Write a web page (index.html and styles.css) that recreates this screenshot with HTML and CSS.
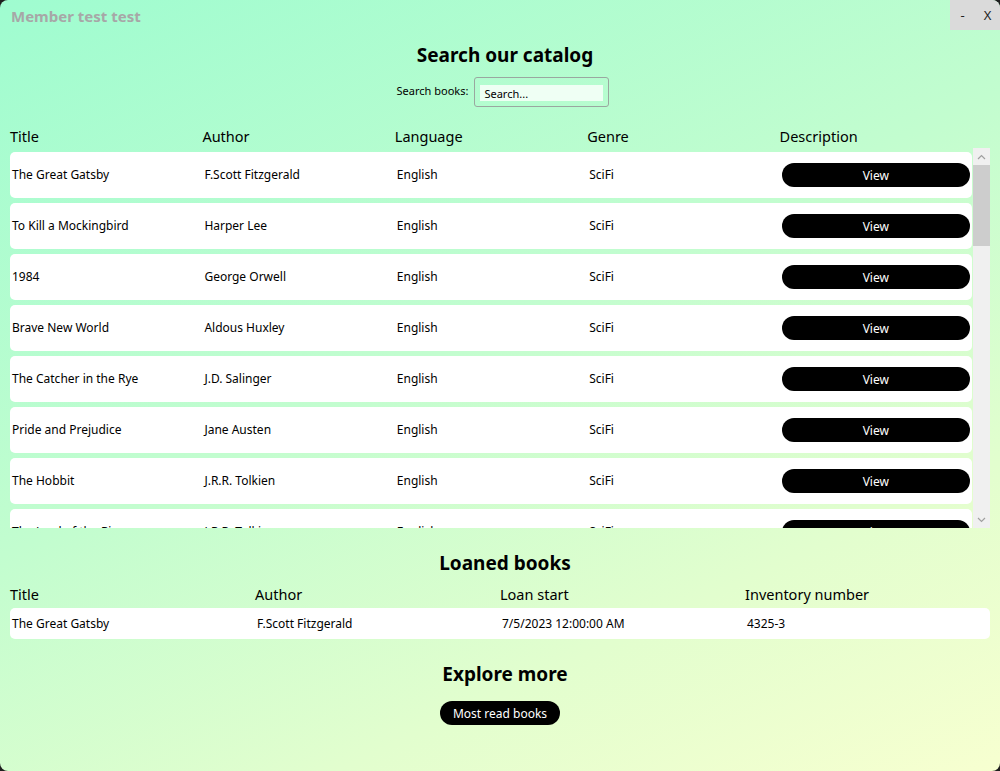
FILE: index.html
```html
<!DOCTYPE html>
<html>
<head>
<meta charset="utf-8">
<link rel="stylesheet" href="styles.css">
</head>
<body>
<div class="window">
  <div class="titlebar">
    <div class="app-title">Member test test</div>
    <div class="win-buttons"><span class="wbtn">-</span><span class="wbtn">X</span></div>
  </div>

  <h1 class="heading h-search">Search our catalog</h1>
  <div class="search-row">
    <label class="search-label">Search books:</label>
    <div class="search-box"><div class="search-field">Search...</div></div>
  </div>

  <div class="cols5 col-head">
    <div>Title</div><div>Author</div><div>Language</div><div>Genre</div><div>Description</div>
  </div>
  <div class="list-wrap">
    <div class="list">
      <div class="cols5 row"><div>The Great Gatsby</div><div>F.Scott Fitzgerald</div><div>English</div><div>SciFi</div><div><span class="pill">View</span></div></div>
      <div class="cols5 row"><div>To Kill a Mockingbird</div><div>Harper Lee</div><div>English</div><div>SciFi</div><div><span class="pill">View</span></div></div>
      <div class="cols5 row"><div>1984</div><div>George Orwell</div><div>English</div><div>SciFi</div><div><span class="pill">View</span></div></div>
      <div class="cols5 row"><div>Brave New World</div><div>Aldous Huxley</div><div>English</div><div>SciFi</div><div><span class="pill">View</span></div></div>
      <div class="cols5 row"><div>The Catcher in the Rye</div><div>J.D. Salinger</div><div>English</div><div>SciFi</div><div><span class="pill">View</span></div></div>
      <div class="cols5 row"><div>Pride and Prejudice</div><div>Jane Austen</div><div>English</div><div>SciFi</div><div><span class="pill">View</span></div></div>
      <div class="cols5 row"><div>The Hobbit</div><div>J.R.R. Tolkien</div><div>English</div><div>SciFi</div><div><span class="pill">View</span></div></div>
      <div class="cols5 row"><div>The Lord of the Rings</div><div>J.R.R. Tolkien</div><div>English</div><div>SciFi</div><div><span class="pill">View</span></div></div>
    </div>
    <div class="scrollbar">
      <div class="sb-arrow"><svg width="9" height="6" viewBox="0 0 9 6"><path d="M1 5 L4.5 1.5 L8 5" fill="none" stroke="#a0a0a0" stroke-width="1.2"/></svg></div>
      <div class="sb-track"><div class="sb-thumb"></div></div>
      <div class="sb-arrow"><svg width="9" height="6" viewBox="0 0 9 6"><path d="M1 1 L4.5 4.5 L8 1" fill="none" stroke="#a0a0a0" stroke-width="1.2"/></svg></div>
    </div>
  </div>

  <h2 class="heading h-loaned">Loaned books</h2>
  <div class="cols4 col-head loan-head">
    <div>Title</div><div>Author</div><div>Loan start</div><div>Inventory number</div>
  </div>
  <div class="cols4 loan-row">
    <div>The Great Gatsby</div><div>F.Scott Fitzgerald</div><div>7/5/2023 12:00:00 AM</div><div>4325-3</div>
  </div>

  <h2 class="heading h-explore">Explore more</h2>
  <div class="explore-row"><span class="pill pill-more">Most read books</span></div>
</div>
</body>
</html>
```

FILE: styles.css
```css
html, body {
  margin: 0;
  padding: 0;
}
body {
  background: #1e1e1e;
  font-family: "Noto Sans", "Open Sans", sans-serif;
  color: #000;
}
.window {
  width: 1000px;
  height: 771px;
  box-sizing: border-box;
  border-radius: 8px;
  overflow: hidden;
  background: linear-gradient(155deg, #9ffcd0 0%, #c2fdcf 45%, #e2fece 75%, #f7ffd0 100%);
  display: flex;
  flex-direction: column;
}
.titlebar {
  height: 30px;
  display: flex;
  justify-content: space-between;
  align-items: flex-start;
}
.app-title {
  font-size: 15px;
  font-weight: 700;
  color: #a7a7a7;
  line-height: 20px;
  margin: 6px 0 0 11px;
}
.win-buttons {
  display: flex;
  background: #dadada;
  height: 30px;
  width: 50px;
}
.wbtn {
  width: 25px;
  text-align: center;
  font-size: 13px;
  line-height: 30px;
  color: #222;
}
.heading {
  margin: 0;
  text-align: center;
  font-size: 19px;
  font-weight: 700;
  line-height: 26px;
}
.h-search { margin-top: 12px; padding-left: 10px; }
.search-row {
  margin-top: 9px;
  display: flex;
  justify-content: center;
  align-items: center;
  gap: 6px;
  padding-left: 6px;
}
.search-label {
  font-size: 11px;
  line-height: 14px;
  margin-top: -2px;
}
.search-box {
  width: 135px;
  height: 30px;
  box-sizing: border-box;
  border: 1px solid #9aa7a0;
  border-radius: 3px;
  padding: 7px 5px 0 5px;
}
.search-field {
  height: 16px;
  background: #effff4;
  font-size: 11px;
  line-height: 17px;
  padding-left: 4px;
}
.cols5 {
  display: grid;
  grid-template-columns: repeat(5, 1fr);
}
.cols4 {
  display: grid;
  grid-template-columns: repeat(4, 1fr);
}
.col-head {
  margin: 19px 28px 0 10px;
  font-size: 14.5px;
  line-height: 20px;
  padding-bottom: 1px;
}
.list-wrap {
  margin: 1px 10px 0 10px;
  height: 380px;
  display: flex;
  gap: 1px;
}
.list {
  flex: 1;
  overflow: hidden;
  padding-top: 4px;
  display: flex;
  flex-direction: column;
  gap: 5px;
}
.row {
  flex: 0 0 46px;
  background: #fff;
  border-radius: 5px;
  align-items: center;
  font-size: 12px;
}
.row > div {
  padding-left: 2px;
  padding-bottom: 2px;
}
.row > div:nth-child(5) { padding: 0 2px 0 2px; }
.pill {
  display: flex;
  justify-content: center;
  align-items: center;
  height: 24px;
  border-radius: 12px;
  background: #000;
  color: #fff;
  font-size: 12px;
}
.scrollbar {
  width: 17px;
  background: #f0f0f0;
  display: flex;
  flex-direction: column;
}
.sb-arrow {
  height: 17px;
  display: flex;
  justify-content: center;
  align-items: center;
}
.sb-track {
  flex: 1;
}
.sb-thumb {
  height: 81px;
  background: #cdcdcd;
}
.h-loaned { margin-top: 22px; padding-left: 10px; }
.loan-head {
  margin: 8px 10px 0 10px;
}
.loan-row {
  margin: 3px 10px 0 10px;
  height: 31px;
  background: #fff;
  border-radius: 5px;
  align-items: center;
  font-size: 12px;
}
.loan-row > div { padding-left: 2px; padding-bottom: 1px; }
.h-explore { margin-top: 22px; padding-left: 10px; }
.explore-row {
  margin-top: 14px;
  display: flex;
  justify-content: center;
}
.pill-more {
  width: 120px;
}
```
